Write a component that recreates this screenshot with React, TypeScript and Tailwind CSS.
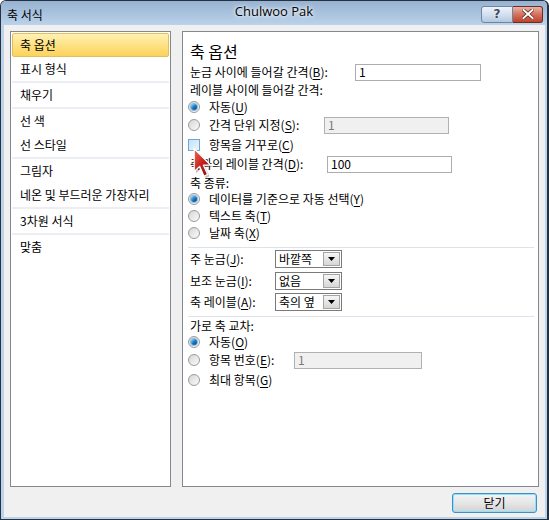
import React from 'react';

function Radio({ checked }: { checked?: boolean }) {
  return (
    <span className="flex h-[12px] w-[12px] shrink-0 items-center justify-center rounded-full border border-[#9a9b9b] bg-gradient-to-br from-[#d6d6d6] to-[#fbfbfb]">
      {checked && (
        <span className="h-[6px] w-[6px] rounded-full bg-gradient-to-br from-[#8fd8f8] via-[#1d79c4] to-[#0b3c78] ring-1 ring-[#7cc0ea]" />
      )}
    </span>
  );
}

function U({ c }: { c: string }) {
  return <span className="underline underline-offset-2">{c}</span>;
}

function TextBox({ value, disabled, w }: { value: string; disabled?: boolean; w: string }) {
  return (
    <div
      className={`${w} flex h-[17px] items-center border px-[3px] text-[12px] ${
        disabled ? 'border-[#adb2b5] bg-[#f0f0f0] text-[#7a7a7a]' : 'border-[#abadb3] bg-white text-black'
      }`}
    >
      {value}
    </div>
  );
}

function Dropdown({ value }: { value: string }) {
  return (
    <div className="flex h-[18px] w-[67px] items-center border border-[#7a7a7a] bg-white">
      <span className="flex-1 pl-[3px] text-[12px] leading-none">{value}</span>
      <span className="mr-[1px] flex h-[14px] w-[17px] items-center justify-center border border-[#a4a4a4] bg-gradient-to-b from-[#f6f6f6] to-[#d6d6d6]">
        <svg width="7" height="4" viewBox="0 0 7 4">
          <path d="M0 0 L7 0 L3.5 4 Z" fill="#000" />
        </svg>
      </span>
    </div>
  );
}

function RadioRow({ checked, children, h }: { checked?: boolean; children: React.ReactNode; h: string }) {
  return (
    <div className={`flex ${h} items-center`}>
      <Radio checked={checked} />
      <div className="ml-[9px] flex items-center">{children}</div>
    </div>
  );
}

const categories: { label: string; sepAfter?: boolean; selected?: boolean }[] = [
  { label: '축 옵션', selected: true },
  { label: '표시 형식', sepAfter: true },
  { label: '채우기', sepAfter: true },
  { label: '선 색' },
  { label: '선 스타일', sepAfter: true },
  { label: '그림자' },
  { label: '네온 및 부드러운 가장자리', sepAfter: true },
  { label: '3차원 서식', sepAfter: true },
  { label: '맞춤' },
];

export default function App() {
  return (
    <div className="relative flex h-[520px] w-[549px] flex-col overflow-hidden rounded-t-[6px] border border-r-2 border-[#26323f] bg-[#bcd3ec] font-['Noto_Sans_CJK_KR',sans-serif] text-[12px] text-black">
      {/* Title bar */}
      <div className="relative flex h-[24px] shrink-0 items-center bg-gradient-to-b from-[#97b2d1] to-[#bad2ea]">
        <span className="pl-[6px] pt-[4px] text-[12px]">축 서식</span>
        <span className="absolute left-0 right-0 top-[1px] text-center font-['Open_Sans',sans-serif] text-[13px] [text-shadow:0_0_6px_#fff,0_0_3px_#fff]">
          Chulwoo Pak
        </span>
        <div className="ml-auto mr-[4px] mt-[2px] flex">
          <div className="flex h-[17px] w-[32px] items-center justify-center rounded-l-[3px] border border-[#6c85a1] bg-gradient-to-b from-[#eef3fa] via-[#d3e0ef] to-[#b4c8de]">
            <span className="font-['DejaVu_Sans',sans-serif] text-[12px] font-bold leading-none text-[#3b4c62] [text-shadow:0_0_2px_#fff]">?</span>
          </div>
          <div className="flex h-[17px] w-[30px] items-center justify-center rounded-r-[3px] border border-l-0 border-[#6d2c22] bg-gradient-to-b from-[#eab3a8] via-[#d4705c] to-[#c0412b]">
            <svg width="12" height="10" viewBox="0 0 12 10">
              <path d="M1.5 1 L10.5 9 M10.5 1 L1.5 9" stroke="#5a2018" strokeWidth="3.4" strokeLinecap="square" />
              <path d="M1.5 1 L10.5 9 M10.5 1 L1.5 9" stroke="#fff" strokeWidth="2" strokeLinecap="square" />
            </svg>
          </div>
        </div>
      </div>

      {/* Client area */}
      <div className="mb-[2px] ml-[3px] mr-[2px] flex flex-1 flex-col bg-[#f0f0f0]">
        <div className="flex gap-[11px] pl-[6px] pr-[6px] pt-[6px]">
          {/* Category list */}
          <div className="flex h-[456px] w-[161px] flex-col border border-[#828790] bg-white p-[1px]">
            {categories.map((c) => (
              <React.Fragment key={c.label}>
                {c.selected ? (
                  <div className="flex h-[24px] items-center rounded-[2px] border border-[#e3be5c] bg-gradient-to-b from-[#fff1b4] via-[#fee283] to-[#fcd35b] pl-[7px]">
                    {c.label}
                  </div>
                ) : (
                  <div className="flex h-[24px] items-center pl-[8px]">{c.label}</div>
                )}
                {c.sepAfter && <div className="h-[2px] bg-[#eceef4]" />}
              </React.Fragment>
            ))}
          </div>

          {/* Options panel */}
          <div className="flex h-[456px] w-[357px] flex-col border border-[#828790] bg-white pl-[5px] pr-[4px] pt-[7px]">
            <div className="flex h-[24px] items-center pl-[2px] text-[16px]">축 옵션</div>
            <div className="flex h-[18px] items-center">
              <span className="w-[167px] pl-[2px]">
                눈금 사이에 들어갈 간격(<U c="B" />):
              </span>
              <TextBox value="1" w="w-[126px]" />
            </div>
            <div className="flex h-[18px] items-center pl-[2px]">레이블 사이에 들어갈 간격:</div>
            <RadioRow checked h="h-[16px]">
              자동(<U c="U" />)
            </RadioRow>
            <div className="flex h-[20px] items-center">
              <Radio />
              <span className="ml-[9px] w-[115px]">
                간격 단위 지정(<U c="S" />):
              </span>
              <TextBox value="1" disabled w="w-[125px]" />
            </div>
            <div className="flex h-[19px] items-center">
              <span className="h-[12px] w-[12px] shrink-0 border border-[#6fa8d6] bg-gradient-to-br from-[#c4e2f8] to-[#e9f5fd]" />
              <span className="ml-[9px]">
                항목을 거꾸로(<U c="C" />)
              </span>
            </div>
            <div className="flex h-[20px] items-center">
              <span className="w-[139px] pl-[2px]">
                축과의 레이블 간격(<U c="D" />):
              </span>
              <TextBox value="100" w="w-[125px]" />
            </div>
            <div className="flex h-[17px] items-center pl-[2px]">축 종류:</div>
            <RadioRow checked h="h-[16px]">
              데이터를 기준으로 자동 선택(<U c="Y" />)
            </RadioRow>
            <RadioRow h="h-[18px]">
              텍스트 축(<U c="T" />)
            </RadioRow>
            <RadioRow h="h-[16px]">
              날짜 축(<U c="X" />)
            </RadioRow>
            <div className="mt-[6px] h-[1px] bg-[#dde3ea]" />
            <div className="flex h-[22px] items-center">
              <span className="w-[87px] pl-[2px]">
                주 눈금(<U c="J" />):
              </span>
              <Dropdown value="바깥쪽" />
            </div>
            <div className="flex h-[21px] items-center">
              <span className="w-[87px] pl-[2px]">
                보조 눈금(<U c="I" />):
              </span>
              <Dropdown value="없음" />
            </div>
            <div className="flex h-[21px] items-center">
              <span className="w-[87px] pl-[2px]">
                축 레이블(<U c="A" />):
              </span>
              <Dropdown value="축의 옆" />
            </div>
            <div className="mt-[4px] h-[1px] bg-[#dde3ea]" />
            <div className="flex h-[17px] items-center pl-[2px]">가로 축 교차:</div>
            <RadioRow checked h="h-[16px]">
              자동(<U c="O" />)
            </RadioRow>
            <div className="flex h-[20px] items-center">
              <Radio />
              <span className="ml-[9px] w-[85px]">
                항목 번호(<U c="E" />):
              </span>
              <TextBox value="1" disabled w="w-[128px]" />
            </div>
            <RadioRow h="h-[20px]">
              최대 항목(<U c="G" />)
            </RadioRow>
          </div>
        </div>

        {/* Footer */}
        <div className="flex justify-end pr-[8px] pt-[6px]">
          <button className="flex h-[20px] w-[85px] items-center justify-center rounded-[3px] border border-[#3c8fc9] bg-gradient-to-b from-[#f4f4f4] via-[#e6e6e6] to-[#d2d2d2] text-[12px] shadow-[inset_0_0_0_1px_#8fe0fa]">
            닫기
          </button>
        </div>
      </div>

      {/* Mouse cursor */}
      <svg
        className="pointer-events-none absolute left-[192px] top-[146px]"
        width="22"
        height="34"
        viewBox="0 0 18 27"
      >
        <defs>
          <linearGradient id="cur" x1="0" y1="0" x2="1" y2="1">
            <stop offset="0" stopColor="#f06a5a" />
            <stop offset="0.5" stopColor="#c5211a" />
            <stop offset="1" stopColor="#7c0a08" />
          </linearGradient>
        </defs>
        <path d="M2.5 2.5 L2.5 21 L7 17 L10.5 25 L13.5 23.5 L10 16 L16 16 Z" fill="#000" opacity="0.25" />
        <path d="M1 1 L1 19.5 L5.5 15.5 L9 23.5 L12 22 L8.5 14.5 L14.5 14.5 Z" fill="url(#cur)" stroke="#fff" strokeWidth="1" strokeLinejoin="round" />
      </svg>
    </div>
  );
}
